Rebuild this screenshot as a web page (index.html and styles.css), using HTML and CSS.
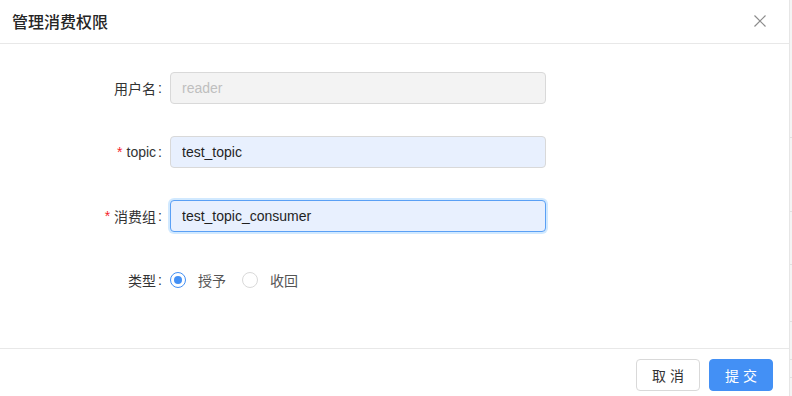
FILE: index.html
```html
<!DOCTYPE html>
<html>
<head>
    <title>管理消费权限</title>
    <link rel="stylesheet" href="styles.css">
</head>
<body>
    <div class="modal">
        <div class="modal-header">
            <div class="modal-title">管理消费权限</div>
            <span class="close">
                <svg width="14" height="14" viewBox="0 0 14 14"><path d="M1.5 1.5 L12.5 12.5 M12.5 1.5 L1.5 12.5" stroke="#8c8c8c" stroke-width="1.2" fill="none"/></svg>
            </span>
        </div>

        <div class="modal-body">
            <form class="form">
                <label class="form-label">用户名<span class="colon">:</span></label>
                <input class="input" type="text" placeholder="reader" disabled>

                <label class="form-label"><span class="req">*</span>topic<span class="colon">:</span></label>
                <input class="input autofill" type="text" value="test_topic">

                <label class="form-label"><span class="req">*</span>消费组<span class="colon">:</span></label>
                <input class="input autofill focused" type="text" value="test_topic_consumer">

                <label class="form-label">类型<span class="colon">:</span></label>
                <div class="radio-group">
                    <label class="radio"><span class="radio-dot checked"></span>授予</label>
                    <label class="radio"><span class="radio-dot"></span>收回</label>
                </div>
            </form>
        </div>

        <div class="modal-footer">
            <button type="button" class="btn">取 消</button>
            <button type="button" class="btn btn-primary">提 交</button>
        </div>
    </div>

    <div class="backdrop">
        <div class="bd-row" style="height: 138px"></div>
        <div class="bd-row" style="height: 74px"></div>
        <div class="bd-row" style="height: 53px"></div>
        <div class="bd-row" style="height: 57px"></div>
        <div class="bd-row" style="height: 38px"></div>
        <div class="bd-row" style="height: 18px"></div>
    </div>
</body>
</html>
```

FILE: styles.css
```css
body { margin: 0; height: 396px; display: flex; overflow: hidden; font-family: "Liberation Sans", "Noto Sans CJK SC", sans-serif; font-size: 14px; color: #333; background: #fff; }
.modal { width: 789px; display: flex; flex-direction: column; background: #fff; }
.modal-header { height: 43px; border-bottom: 1px solid #e8e8e8; display: flex; align-items: center; justify-content: space-between; padding: 0 22px 0 12px; }
.modal-title { font-size: 16px; font-weight: 500; color: #262626; margin-top: -2px; }
.close { display: flex; margin-top: -2px; }
.modal-body { height: 304px; box-sizing: border-box; padding-top: 28px; }
.form { display: grid; grid-template-columns: 170px 376px; row-gap: 32px; margin: 0; }
.form-label { height: 32px; display: flex; align-items: center; justify-content: flex-end; color: #333; }
.colon { margin: 0 8px 0 2px; }
.req { color: #f5222d; margin-right: 4px; font-family: "Liberation Sans", sans-serif; }
.input { height: 32px; box-sizing: border-box; border: 1px solid #d9d9d9; border-radius: 4px; padding: 0 11px; font-family: inherit; font-size: 14px; color: #1f1f1f; background: #fff; outline: none; }
.input:disabled { background: #f3f3f3; }
.input::placeholder { color: #bfbfbf; }
.autofill { background: #e8f0fe; }
.focused { border-color: #5aa0f5; box-shadow: 0 0 0 2px rgba(24,144,255,0.2); }
.radio-group { height: 32px; display: flex; align-items: center; gap: 16px; }
.radio { display: flex; align-items: center; color: #555; }
.radio-dot { width: 16px; height: 16px; box-sizing: border-box; border: 1px solid #d9d9d9; border-radius: 50%; margin-right: 12px; position: relative; background: #fff; }
.radio-dot.checked { border-color: #4390f5; }
.radio-dot.checked::after { content: ""; position: absolute; left: 3px; top: 3px; width: 8px; height: 8px; border-radius: 50%; background: #4390f5; }
.modal-footer { flex: 1; border-top: 1px solid #e8e8e8; display: flex; align-items: flex-start; justify-content: flex-end; gap: 9px; padding: 10px 16px 0 0; box-sizing: border-box; }
.btn { width: 64px; height: 32px; border: 1px solid #d9d9d9; border-radius: 4px; background: #fff; color: #333; font-family: inherit; font-size: 14px; cursor: pointer; padding: 0; }
.btn-primary { background: #4390f5; border-color: #4390f5; color: #fff; }
.backdrop { flex: 1; background: #f4f4f4; border-left: 1px solid #e6e6e6; }
.bd-row { border-bottom: 1px solid #e0e0e0; box-sizing: border-box; }
```
